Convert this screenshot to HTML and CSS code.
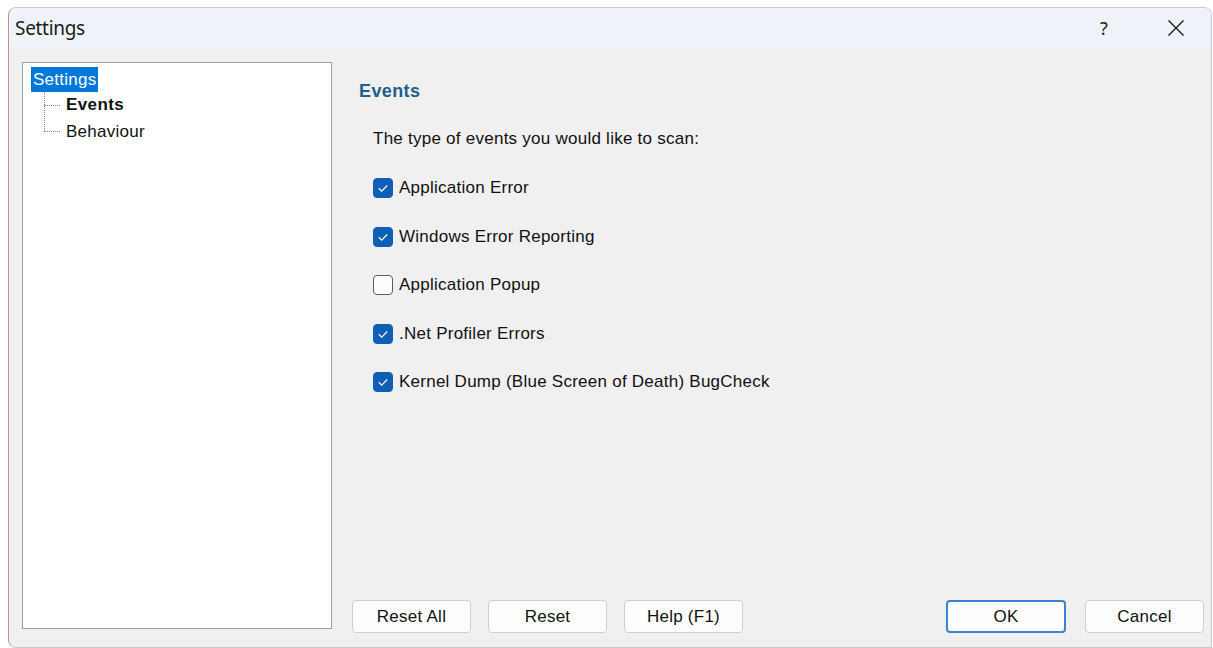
FILE: index.html
```html
<!DOCTYPE html>
<html lang="en">
<head>
<meta charset="utf-8">
<title>Settings</title>
<link rel="stylesheet" href="styles.css">
</head>
<body>
<div class="window">
  <div class="titlebar">
    <span class="title">Settings</span>
    <div class="caption-buttons">
      <span class="cap-help">?</span>
      <span class="cap-close">
        <svg width="18" height="18" viewBox="0 0 18 18"><path d="M1.5 1.5 L16.5 16.5 M16.5 1.5 L1.5 16.5" stroke="#1a1a1a" stroke-width="1.4" fill="none"/></svg>
      </span>
    </div>
  </div>
  <div class="client">
    <div class="tree">
      <div class="tree-row root"><span class="sel">Settings</span></div>
      <div class="tree-children">
        <div class="tree-row child"><span class="branch"></span><span class="bold">Events</span></div>
        <div class="tree-row child last"><span class="branch"></span><span>Behaviour</span></div>
      </div>
    </div>
    <div class="pane">
      <div class="page">
        <h2 class="page-title">Events</h2>
        <p class="intro">The type of events you would like to scan:</p>
        <ul class="checks">
          <li><span class="box on"><svg viewBox="0 0 20 20"><path d="M5.3 10.3 L8.5 13.4 L14.7 7.2" stroke="#fff" stroke-width="1.3" fill="none"/></svg></span>Application Error</li>
          <li><span class="box on"><svg viewBox="0 0 20 20"><path d="M5.3 10.3 L8.5 13.4 L14.7 7.2" stroke="#fff" stroke-width="1.3" fill="none"/></svg></span>Windows Error Reporting</li>
          <li><span class="box"></span>Application Popup</li>
          <li><span class="box on"><svg viewBox="0 0 20 20"><path d="M5.3 10.3 L8.5 13.4 L14.7 7.2" stroke="#fff" stroke-width="1.3" fill="none"/></svg></span>.Net Profiler Errors</li>
          <li><span class="box on"><svg viewBox="0 0 20 20"><path d="M5.3 10.3 L8.5 13.4 L14.7 7.2" stroke="#fff" stroke-width="1.3" fill="none"/></svg></span>Kernel Dump (Blue Screen of Death) BugCheck</li>
        </ul>
      </div>
      <div class="buttons">
        <div class="left-buttons">
          <button class="btn">Reset All</button>
          <button class="btn">Reset</button>
          <button class="btn">Help (F1)</button>
        </div>
        <div class="right-buttons">
          <button class="btn default">OK</button>
          <button class="btn">Cancel</button>
        </div>
      </div>
    </div>
  </div>
</div>
</body>
</html>
```
FILE: styles.css
```css
* { box-sizing: border-box; }

html, body {
  margin: 0;
  padding: 0;
  background: #ffffff;
  overflow: hidden;
}

body {
  width: 1213px;
  height: 648px;
  padding: 7px 0 0 8px;
  font-family: "Liberation Sans", Arial, sans-serif;
  font-size: 17px;
  letter-spacing: 0.25px;
  color: #111;
}

.window {
  width: 1204px;
  height: 641px;
  border: 1px solid #c9c9c9;
  border-left-color: #c98d8d;
  border-radius: 8px 8px 0 8px;
  background: #f0f0f0;
  overflow: hidden;
  display: flex;
  flex-direction: column;
}

.titlebar {
  height: 40px;
  background: #eff3f9;
  display: flex;
  align-items: center;
  justify-content: space-between;
  padding-left: 6px;
}

.title {
  font-family: "Noto Sans", "Open Sans", sans-serif;
  font-size: 19px;
  color: #1a1a1a;
  letter-spacing: -0.3px;
}

.caption-buttons {
  display: flex;
  align-items: center;
  height: 100%;
}

.cap-help {
  font-family: "Noto Sans", sans-serif;
  font-size: 18px;
  color: #1a1a1a;
  width: 74px;
  text-align: center;
  margin-right: 4px;
}

.cap-close {
  width: 66px;
  display: flex;
  justify-content: center;
  align-items: center;
  padding-right: 4px;
}

.client {
  flex: 1;
  display: flex;
  padding: 14px 7px 0 13px;
}

/* navigation tree */
.tree {
  width: 310px;
  height: 567px;
  background: #ffffff;
  border: 1px solid #a0a0a0;
  padding: 3px 0 0 8px;
  flex-shrink: 0;
}

.tree-row {
  height: 26px;
  line-height: 26px;
  display: flex;
  align-items: center;
  white-space: nowrap;
}

.sel {
  background: #0078d7;
  color: #fff;
  padding: 0 2px 0 2px;
  height: 25px;
  line-height: 25px;
}

.tree-children {
  position: relative;
  margin-left: 13px;
}

.tree-children::before {
  content: "";
  position: absolute;
  left: 0;
  top: -1px;
  height: 40px;
  border-left: 1px dotted #8a8a8a;
}

.tree-row.child { height: 26.5px; }

.branch {
  width: 16px;
  border-top: 1px dotted #8a8a8a;
  margin-right: 6px;
}

.bold { font-weight: bold; letter-spacing: 0.4px; }

/* right pane */
.pane {
  flex: 1;
  display: flex;
  flex-direction: column;
  justify-content: space-between;
  padding-left: 20px;
  height: 571px;
}

.page {
  padding: 19px 0 0 7px;
}

.page-title {
  margin: 0;
  font-size: 18px;
  font-weight: bold;
  color: #1f5f8b;
  line-height: 20px;
  letter-spacing: 0.4px;
}

.intro {
  margin: 28px 0 0 14px;
  line-height: 20px;
}

.checks {
  list-style: none;
  margin: 29px 0 0 14px;
  padding: 0;
  display: flex;
  flex-direction: column;
  gap: 28.5px;
}

.checks li {
  display: flex;
  align-items: center;
  height: 20px;
  line-height: 20px;
}

.box {
  width: 20px;
  height: 20px;
  border: 1.5px solid #5c5c5c;
  border-radius: 4px;
  margin-right: 6px;
  background: #fdfdfd;
  flex-shrink: 0;
  display: flex;
}

.box.on {
  background: #0f5fb5;
  border-color: #0f5fb5;
}

.box svg {
  width: 100%;
  height: 100%;
}

.buttons {
  display: flex;
  justify-content: space-between;
  align-items: center;
}

.left-buttons, .right-buttons {
  display: flex;
  gap: 17px;
}

.right-buttons { gap: 19px; }

.btn {
  width: 119px;
  height: 33px;
  font-family: "Liberation Sans", Arial, sans-serif;
  font-size: 17px;
  letter-spacing: 0.25px;
  color: #111;
  background: #fdfdfd;
  border: 1px solid #cfcfcf;
  border-radius: 4px;
  padding: 0;
}

.btn.default {
  width: 120px;
  border: 2px solid #3b82d0;
}
```
